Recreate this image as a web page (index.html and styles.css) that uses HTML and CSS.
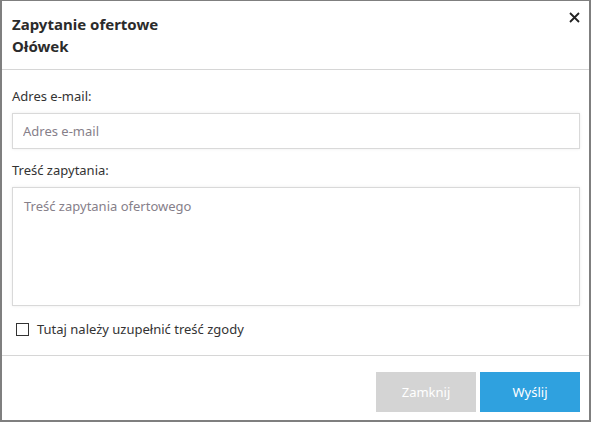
FILE: index.html
```html
<!DOCTYPE html>
<html lang="pl">
  <head>
    <meta charset="UTF-8" />
    <meta name="viewport" content="width=device-width, initial-scale=1.0" />
    <title>Zapytanie ofertowe</title>
    <link rel="stylesheet" href="styles.css">
  </head>

  <body>
    <div class="modal">
      <header class="modal-header">
        <h1>Zapytanie ofertowe<br />Ołówek</h1>
        <button type="button" class="close" aria-label="Zamknij">
          <svg width="11" height="11" viewBox="0 0 11 11">
            <path d="M1 1 L10 10 M10 1 L1 10" stroke="#222" stroke-width="1.8" />
          </svg>
        </button>
      </header>

      <form class="modal-body">
        <label for="email">Adres e-mail:</label>
        <input type="email" id="email" placeholder="Adres e-mail" />

        <label for="query">Treść zapytania:</label>
        <textarea id="query" placeholder="Treść zapytania ofertowego"></textarea>

        <label class="consent">
          <span class="box"></span>
          Tutaj należy uzupełnić treść zgody
        </label>
      </form>

      <footer class="modal-footer">
        <button type="button" class="btn btn-close">Zamknij</button>
        <button type="submit" class="btn btn-send">Wyślij</button>
      </footer>
    </div>
  </body>
</html>
```

FILE: styles.css
```css
body {
  margin: 0;
  font-family: "Noto Sans", "Open Sans", sans-serif;
  color: #333;
}

.modal {
  width: 591px;
  height: 422px;
  box-sizing: border-box;
  border: 2px solid #7f7f7f;
  border-top-width: 1px;
  background: #fff;
  display: flex;
  flex-direction: column;
}

.modal-header {
  position: relative;
  padding: 12px 10px 12px;
  border-bottom: 1px solid #d6d6d6;
}

.modal-header h1 {
  margin: 0;
  font-size: 15px;
  line-height: 22px;
  font-weight: bold;
  color: #2b2b2b;
}

.close {
  position: absolute;
  top: 10px;
  right: 9px;
  padding: 0;
  border: none;
  background: none;
  cursor: pointer;
}

.modal-body {
  padding: 17px 9px 0 10px;
  display: flex;
  flex-direction: column;
  height: 286px;
  box-sizing: border-box;
  border-bottom: 1px solid #d6d6d6;
  margin: 0;
}

.modal-body label {
  font-size: 13px;
  line-height: 18px;
  margin-bottom: 8px;
}

input,
textarea {
  font-family: inherit;
  font-size: 13px;
  color: #333;
  border: 1px solid #d9d9d9;
  box-shadow: 0 0 3px rgba(0, 0, 0, 0.08);
  box-sizing: border-box;
  margin: 0 0 12px;
  outline: none;
}

input {
  height: 36px;
  padding: 0 10px;
}

textarea {
  height: 119px;
  padding: 9px 11px;
  resize: none;
}

::placeholder {
  color: #86808a;
}

.modal-body .consent {
  display: flex;
  align-items: center;
  gap: 8px;
  padding-left: 4px;
  margin: 2px 0 0;
  cursor: pointer;
}

.box {
  width: 11px;
  height: 11px;
  border: 1px solid #333;
}

.modal-footer {
  display: flex;
  justify-content: flex-end;
  gap: 4px;
  padding: 16px 9px 0;
}

.btn {
  width: 100px;
  height: 40px;
  border: none;
  color: #fff;
  font-family: inherit;
  font-size: 13px;
  cursor: pointer;
}

.btn-close {
  background-color: #d4d4d4;
}

.btn-send {
  background-color: #2fa1df;
}
```
